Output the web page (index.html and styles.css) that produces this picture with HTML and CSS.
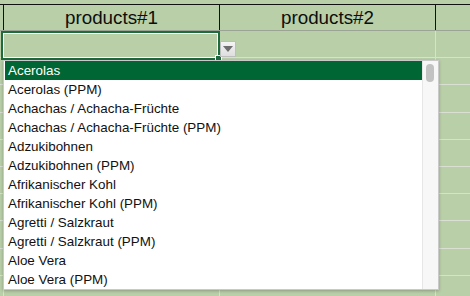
FILE: index.html
```html
<!DOCTYPE html>
<html lang="de">
<head>
    <meta charset="UTF-8">
    <title>products</title>
    <link rel="stylesheet" href="styles.css">
</head>
<body>
    <div class="sheet">
        <div class="row top-row">
            <div class="cell c0"></div><div class="cell c1"></div><div class="cell c2"></div><div class="cell c3"></div>
        </div>
        <div class="row head-row">
            <div class="cell c0"></div>
            <div class="cell c1">products#1</div>
            <div class="cell c2">products#2</div>
            <div class="cell c3"></div>
        </div>
        <div class="row data-row"><div class="cell c0"></div><div class="cell c1"></div><div class="cell c2"></div><div class="cell c3"></div></div>
        <div class="row data-row"><div class="cell c0"></div><div class="cell c1"></div><div class="cell c2"></div><div class="cell c3"></div></div>
        <div class="row data-row"><div class="cell c0"></div><div class="cell c1"></div><div class="cell c2"></div><div class="cell c3"></div></div>
        <div class="row data-row"><div class="cell c0"></div><div class="cell c1"></div><div class="cell c2"></div><div class="cell c3"></div></div>
        <div class="row data-row"><div class="cell c0"></div><div class="cell c1"></div><div class="cell c2"></div><div class="cell c3"></div></div>
        <div class="row data-row"><div class="cell c0"></div><div class="cell c1"></div><div class="cell c2"></div><div class="cell c3"></div></div>
        <div class="row data-row"><div class="cell c0"></div><div class="cell c1"></div><div class="cell c2"></div><div class="cell c3"></div></div>
        <div class="row data-row"><div class="cell c0"></div><div class="cell c1"></div><div class="cell c2"></div><div class="cell c3"></div></div>
        <div class="row data-row"><div class="cell c0"></div><div class="cell c1"></div><div class="cell c2"></div><div class="cell c3"></div></div>
        <div class="row data-row"><div class="cell c0"></div><div class="cell c1"></div><div class="cell c2"></div><div class="cell c3"></div></div>

        <!-- active cell + validation dropdown -->
        <div class="selection"><span class="handle"></span></div>
        <div class="drop-btn">
            <svg width="10" height="6" viewBox="0 0 10 6"><path d="M0 0 H10 L5 6 Z" fill="#6e6e6e"/></svg>
        </div>
        <div class="dropdown">
            <ul class="options">
                <li class="active">Acerolas</li>
                <li>Acerolas (PPM)</li>
                <li>Achachas / Achacha-Früchte</li>
                <li>Achachas / Achacha-Früchte (PPM)</li>
                <li>Adzukibohnen</li>
                <li>Adzukibohnen (PPM)</li>
                <li>Afrikanischer Kohl</li>
                <li>Afrikanischer Kohl (PPM)</li>
                <li>Agretti / Salzkraut</li>
                <li>Agretti / Salzkraut (PPM)</li>
                <li>Aloe Vera</li>
                <li>Aloe Vera (PPM)</li>
            </ul>
            <div class="scrollbar"><div class="thumb"></div></div>
        </div>
    </div>
</body>
</html>
```

FILE: styles.css
```css
body {
    margin: 0;
    background-color: #b9cfa8;
    font-family: "Liberation Sans", Arial, sans-serif;
    overflow: hidden;
}

.sheet {
    position: relative;
    width: 470px;
    height: 296px;
    background-color: #b9cfa8;
}

.row {
    display: flex;
}

.cell {
    box-sizing: border-box;
    border-right: 1px solid #d3dccb;
    flex: none;
}

.c0 { width: 4px; }
.c1 { width: 216px; }
.c2 { width: 216px; }
.c3 { flex: 1; border-right: none; }

.top-row {
    height: 5px;
    border-bottom: 1px solid #111;
    box-sizing: border-box;
}

.top-row .cell {
    border-right-color: transparent;
}

.head-row {
    height: 26px;
    box-sizing: border-box;
    border-bottom: 1px solid #9aa394;
}

.head-row .cell {
    border-right: 1px solid #111;
    text-align: center;
    font-size: 18.8px;
    line-height: 25px;
    color: #0d0d0d;
}

.head-row .c3 {
    border-right: none;
}

.data-row {
    height: 27.2px;
    box-sizing: border-box;
    border-bottom: 1px solid #d9dfd2;
}

.data-row .cell {
    border-right-color: #d9dfd2;
}

.selection {
    position: absolute;
    left: 1px;
    top: 31px;
    width: 219px;
    height: 29px;
    box-sizing: border-box;
    border: 2px solid #1e6b3e;
    box-shadow: inset 0 0 0 1px #ffffff;
}

.handle {
    position: absolute;
    right: -4px;
    bottom: -4px;
    width: 5px;
    height: 5px;
    background-color: #1e6b3e;
    border: 1px solid #fff;
}

.drop-btn {
    position: absolute;
    left: 220px;
    top: 41px;
    width: 16px;
    height: 16px;
    box-sizing: border-box;
    background: linear-gradient(#f4f4f4, #dedede);
    border: 1px solid #bdbdbd;
    display: flex;
    align-items: center;
    justify-content: center;
}

.dropdown {
    position: absolute;
    left: 3px;
    top: 60px;
    width: 436px;
    height: 230px;
    box-sizing: border-box;
    background-color: #fff;
    border: 1px solid #c9c9c9;
    box-shadow: 0 1px 3px rgba(0, 0, 0, 0.25);
    display: flex;
}

.options {
    list-style: none;
    margin: 0;
    padding: 0;
    flex: 1;
    padding-left: 1px;
}

.options li {
    height: 19px;
    line-height: 19px;
    font-size: 13.4px;
    color: #111;
    padding-left: 3px;
}

.options li.active {
    background-color: #006633;
    color: #fff;
}

.scrollbar {
    width: 15px;
    background-color: #f7f7f7;
    border-left: 1px solid #e6e6e6;
    position: relative;
}

.thumb {
    position: absolute;
    left: 3px;
    top: 3px;
    width: 8px;
    height: 18px;
    border-radius: 4px;
    background-color: #c2c2c2;
}
```
